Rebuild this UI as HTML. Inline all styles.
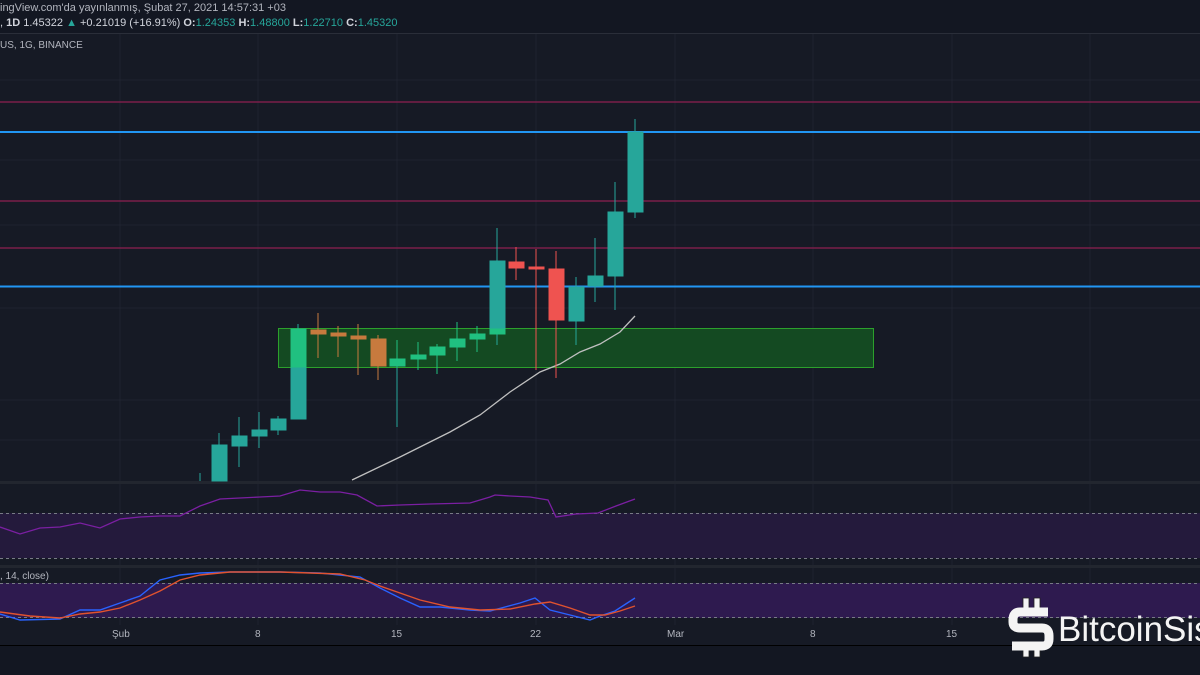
<!DOCTYPE html>
<html><head><meta charset="utf-8"><style>
html,body{margin:0;padding:0;background:#151924;}
body{width:1200px;height:675px;overflow:hidden;position:relative;font-family:"Liberation Sans","DejaVu Sans",sans-serif;}
.t{position:absolute;color:#d1d4dc;font-size:11px;white-space:nowrap}
</style></head><body>
<svg width="1200" height="675" style="position:absolute;left:0;top:0">
<rect width="1200" height="675" fill="#161a25"/>
<rect y="0" width="1200" height="33" fill="#131722"/>
<line x1="0" y1="33.5" x2="1200" y2="33.5" stroke="#2a2e39"/>
<g stroke="#1f2330" stroke-width="1">
<line x1="120" y1="34" x2="120" y2="625"/><line x1="258" y1="34" x2="258" y2="625"/><line x1="397" y1="34" x2="397" y2="625"/><line x1="536" y1="34" x2="536" y2="625"/><line x1="675" y1="34" x2="675" y2="625"/><line x1="813" y1="34" x2="813" y2="625"/><line x1="952" y1="34" x2="952" y2="625"/><line x1="1090" y1="34" x2="1090" y2="625"/>
<line x1="0" y1="80" x2="1200" y2="80"/><line x1="0" y1="160" x2="1200" y2="160"/><line x1="0" y1="225" x2="1200" y2="225"/><line x1="0" y1="308" x2="1200" y2="308"/><line x1="0" y1="400" x2="1200" y2="400"/><line x1="0" y1="440" x2="1200" y2="440"/>
</g>
<rect x="0" y="481" width="1200" height="3" fill="#22262f"/>
<rect x="0" y="565" width="1200" height="3" fill="#22262f"/>
<rect x="0" y="513" width="1200" height="45" fill="#241a3c"/>
<line x1="0" y1="513.5" x2="1200" y2="513.5" stroke="#787b86" stroke-dasharray="3,3"/>
<line x1="0" y1="558.5" x2="1200" y2="558.5" stroke="#787b86" stroke-dasharray="3,3"/>
<polyline fill="none" stroke="#7b1fa2" stroke-width="1.3" points="0,527 20,534 40,528 60,527 80,523 100,528 120,519 140,517 160,516 180,516 200,506 220,499 240,498 260,497 280,496 300,490 320,492 340,492 357,495 377,506 400,505 430,504 470,503 490,497 495,495 510,496 530,497 548,500 556,517 576,514 598,513 616,506 635,499"/>
<rect x="0" y="583" width="1200" height="35" fill="#2e1a4f"/>
<line x1="0" y1="583.5" x2="1200" y2="583.5" stroke="#787b86" stroke-dasharray="3,3"/>
<line x1="0" y1="617.5" x2="1200" y2="617.5" stroke="#787b86" stroke-dasharray="3,3"/>
<polyline fill="none" stroke="#2962ff" stroke-width="1.4" points="0,614 20,620 60,619 80,610 100,610 120,603 140,596 160,580 180,575 200,573 230,572 280,572 320,573 360,577 380,588 400,598 420,607 440,607 470,610 490,611 520,603 535,598 550,610 570,615 590,620 600,616 615,611 635,598"/>
<polyline fill="none" stroke="#e0522e" stroke-width="1.4" points="0,612 30,616 60,618 80,614 100,612 120,608 140,600 160,591 180,580 200,575 230,572 280,572 340,574 365,580 380,586 400,593 420,600 450,607 480,610 510,609 535,604 550,602 570,608 590,615 605,615 620,611 635,606"/>
<rect x="0" y="646" width="1200" height="29" fill="#131722"/>
<line x1="0" y1="645.5" x2="1200" y2="645.5" stroke="#000" stroke-width="1"/>
<line x1="0" y1="102" x2="1200" y2="102" stroke="#7a1e4a" stroke-width="1.5"/>
<line x1="0" y1="132" x2="1200" y2="132" stroke="#2196f3" stroke-width="2"/>
<line x1="0" y1="201" x2="1200" y2="201" stroke="#7a1e4a" stroke-width="1.5"/>
<line x1="0" y1="248" x2="1200" y2="248" stroke="#7a1e4a" stroke-width="1.5"/>
<line x1="0" y1="286.5" x2="1200" y2="286.5" stroke="#2196f3" stroke-width="2"/>
<!-- green zone under candles -->
<rect x="278.5" y="328.5" width="595" height="39" fill="#144a22" stroke="#2ca02c" stroke-width="1"/>
<polyline fill="none" stroke="#c0c0c0" stroke-width="1.3" points="352,480 400,457 450,432 480,415 510,392 540,372 560,364 580,352 600,344 620,332 635,316"/>
<g stroke-width="1">
<g stroke="#26a69a" fill="#26a69a">
<line x1="200" y1="473" x2="200" y2="481"/>
<line x1="219" y1="433" x2="219" y2="481"/><rect x="212" y="445" width="15" height="36"/>
<line x1="239" y1="417" x2="239" y2="467"/><rect x="232" y="436" width="15" height="10"/>
<line x1="259" y1="412" x2="259" y2="448"/><rect x="252" y="430" width="15" height="6"/>
<line x1="278" y1="416" x2="278" y2="435"/><rect x="271" y="419" width="15" height="11"/>
<line x1="298" y1="324" x2="298" y2="419"/><rect x="291" y="329" width="15" height="90"/>
<line x1="497" y1="228" x2="497" y2="345"/><rect x="490" y="261" width="15" height="73"/>
<line x1="576" y1="277" x2="576" y2="345"/><rect x="569" y="287" width="15" height="34"/>
<line x1="595" y1="238" x2="595" y2="302"/><rect x="588" y="276" width="15" height="10"/>
<line x1="615" y1="182" x2="615" y2="310"/><rect x="608" y="212" width="15" height="64"/>
<line x1="635" y1="119" x2="635" y2="218"/><rect x="628" y="132" width="15" height="80"/>
<line x1="397" y1="367" x2="397" y2="427"/>
</g>
<g stroke="#20c080" fill="#20c080">
<rect x="291" y="329" width="15" height="38"/>
<rect x="490" y="329" width="15" height="5"/>
<line x1="397" y1="340" x2="397" y2="367"/><rect x="390" y="359" width="15" height="7"/>
<line x1="418" y1="342" x2="418" y2="370"/><rect x="411" y="355" width="15" height="4"/>
<line x1="437" y1="344" x2="437" y2="374"/><rect x="430" y="347" width="15" height="8"/>
<line x1="457" y1="322" x2="457" y2="361"/><rect x="450" y="339" width="15" height="8"/>
<line x1="477" y1="326" x2="477" y2="352"/><rect x="470" y="334" width="15" height="5"/>
</g>
<g stroke="#c77a3e" fill="#c77a3e">
<line x1="318" y1="313" x2="318" y2="358"/><rect x="311" y="330" width="15" height="4"/>
<line x1="338" y1="326" x2="338" y2="357"/><rect x="331" y="333" width="15" height="3"/>
<line x1="358" y1="324" x2="358" y2="375"/><rect x="351" y="336" width="15" height="3"/>
<line x1="378" y1="335" x2="378" y2="380"/><rect x="371" y="339" width="15" height="27"/>
</g>
<g stroke="#ef5350" fill="#ef5350">
<line x1="516" y1="247" x2="516" y2="280"/><rect x="509" y="262" width="15" height="6"/>
<line x1="536" y1="249" x2="536" y2="370"/><rect x="529" y="267" width="15" height="2"/>
<line x1="556" y1="251" x2="556" y2="378"/><rect x="549" y="269" width="15" height="51"/>
</g>
</g>
<g fill="#f4f4f4" stroke="#222" stroke-width="0.8">
<rect x="1023" y="598" width="6" height="12"/><rect x="1034" y="598" width="6" height="12"/>
<rect x="1023" y="645" width="6" height="12"/><rect x="1034" y="645" width="6" height="12"/>
</g>
<path d="M1048,612 L1020,612 Q1013,612 1013,620 L1013,622 Q1013,628 1020,628 L1042,628 Q1049,628 1049,636 L1049,639 Q1049,646 1042,646 L1012,646" fill="none" stroke="#f4f4f4" stroke-width="9"/>
<text x="1058" y="641" font-family="Liberation Sans, sans-serif" font-size="35" fill="#f4f4f4">BitcoinSis</text>
</svg>
<div class="t" style="left:0;top:2px;font-size:11px;color:#b2b5be">ingView.com'da yayınlanmış, Şubat 27, 2021 14:57:31 +03</div>
<div class="t" style="left:0;top:17px;font-size:11px;color:#d1d4dc">, <b>1D</b> 1.45322 <span style="color:#26a69a">▲</span> +0.21019 (+16.91%) <b>O:</b><span style="color:#26a69a">1.24353</span> <b>H:</b><span style="color:#26a69a">1.48800</span> <b>L:</b><span style="color:#26a69a">1.22710</span> <b>C:</b><span style="color:#26a69a">1.45320</span></div>
<div class="t" style="left:0;top:40px;font-size:10px;color:#b2b5be">US, 1G, BINANCE</div>
<div class="t" style="left:0;top:571px;font-size:10px;color:#b2b5be">, 14, close)</div>
<div class="t" style="left:112px;top:629px;font-size:10px;color:#b2b5be">Şub</div>
<div class="t" style="left:255px;top:629px;font-size:10px;color:#b2b5be">8</div>
<div class="t" style="left:391px;top:629px;font-size:10px;color:#b2b5be">15</div>
<div class="t" style="left:530px;top:629px;font-size:10px;color:#b2b5be">22</div>
<div class="t" style="left:667px;top:629px;font-size:10px;color:#b2b5be">Mar</div>
<div class="t" style="left:810px;top:629px;font-size:10px;color:#b2b5be">8</div>
<div class="t" style="left:946px;top:629px;font-size:10px;color:#b2b5be">15</div>
</body></html>
